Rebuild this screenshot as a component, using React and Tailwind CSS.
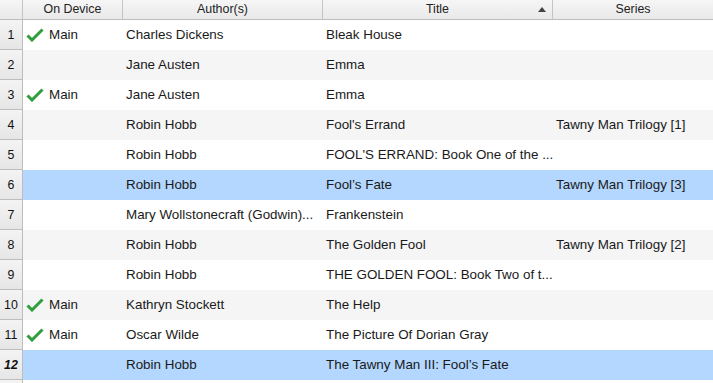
import React from "react";

const rows = [
  { n: "1", dev: true, a: "Charles Dickens", t: "Bleak House", s: "" },
  { n: "2", dev: false, a: "Jane Austen", t: "Emma", s: "" },
  { n: "3", dev: true, a: "Jane Austen", t: "Emma", s: "" },
  { n: "4", dev: false, a: "Robin Hobb", t: "Fool's Errand", s: "Tawny Man Trilogy [1]" },
  { n: "5", dev: false, a: "Robin Hobb", t: "FOOL'S ERRAND: Book One of the ...", s: "" },
  { n: "6", dev: false, a: "Robin Hobb", t: "Fool’s Fate", s: "Tawny Man Trilogy [3]", sel: true },
  { n: "7", dev: false, a: "Mary Wollstonecraft (Godwin)...", t: "Frankenstein", s: "" },
  { n: "8", dev: false, a: "Robin Hobb", t: "The Golden Fool", s: "Tawny Man Trilogy [2]" },
  { n: "9", dev: false, a: "Robin Hobb", t: "THE GOLDEN FOOL: Book Two of t...", s: "" },
  { n: "10", dev: true, a: "Kathryn Stockett", t: "The Help", s: "" },
  { n: "11", dev: true, a: "Oscar Wilde", t: "The Picture Of Dorian Gray", s: "" },
  { n: "12", dev: false, a: "Robin Hobb", t: "The Tawny Man III: Fool’s Fate", s: "", sel: true, cur: true },
];

function Check() {
  return (
    <svg width="18" height="14" viewBox="0 0 18 14" className="shrink-0">
      <path d="M1.5 7.5 L6 12 L16.5 1.5" fill="none" stroke="#2f9e3b" strokeWidth="3" strokeLinecap="butt" strokeLinejoin="miter" />
    </svg>
  );
}

export default function App() {
  return (
    <div
      className="w-[713px] h-[383px] overflow-hidden bg-white text-[13.4px] text-[#1a1a1a]"
      style={{ fontFamily: '"Liberation Sans", Arial, sans-serif' }}
    >
      <div className="flex h-[20px] border-b border-[#bdbdbd] bg-gradient-to-b from-[#f6f6f6] to-[#e9e9e9] text-[12.4px] text-[#222]">
        <div className="w-[23px] shrink-0 border-r border-[#c4c4c4]" />
        <div className="w-[100px] shrink-0 border-r border-[#c4c4c4] flex items-center justify-center">On Device</div>
        <div className="w-[200px] shrink-0 border-r border-[#c4c4c4] flex items-center justify-center">Author(s)</div>
        <div className="w-[230px] shrink-0 border-r border-[#c4c4c4] flex items-center justify-center relative">
          Title
          <svg width="8" height="5" viewBox="0 0 8 5" className="absolute right-[6px] top-[7px]">
            <path d="M0 5 L4 0 L8 5 Z" fill="#444" />
          </svg>
        </div>
        <div className="flex-1 flex items-center justify-center">Series</div>
      </div>
      {rows.map((r, i) => (
        <div
          key={i}
          className={"flex h-[30px] items-center " + (r.sel ? "bg-[#b3d7ff]" : "bg-white")}
          style={!r.sel && i % 2 === 1 ? { backgroundColor: "#f5f5f5" } : undefined}
        >
          <div
            className={
              "w-[23px] h-full shrink-0 border-r border-b border-[#bdbdbd] bg-gradient-to-b from-[#f4f4f4] to-[#e6e6e6] flex items-center justify-center pt-[1px] text-[12.4px] text-[#111] " +
              (r.cur ? "font-bold italic" : "")
            }
          >
            {r.n}
          </div>
          <div className="w-[100px] shrink-0 flex items-center gap-[5px] pl-[3px] pt-[1px]">
            {r.dev ? (
              <>
                <Check />
                <span>Main</span>
              </>
            ) : null}
          </div>
          <div className="w-[200px] shrink-0 pl-[3px] pt-[1px] whitespace-nowrap overflow-hidden">{r.a}</div>
          <div className="w-[230px] shrink-0 pl-[3px] pt-[1px] whitespace-nowrap overflow-hidden">{r.t}</div>
          <div className="flex-1 pl-[3px] pt-[1px] whitespace-nowrap overflow-hidden">{r.s}</div>
        </div>
      ))}
      <div className="flex h-[30px]">
        <div className="w-[23px] h-full shrink-0 border-r border-[#bdbdbd] bg-gradient-to-b from-[#f4f4f4] to-[#e6e6e6]" />
      </div>
    </div>
  );
}
